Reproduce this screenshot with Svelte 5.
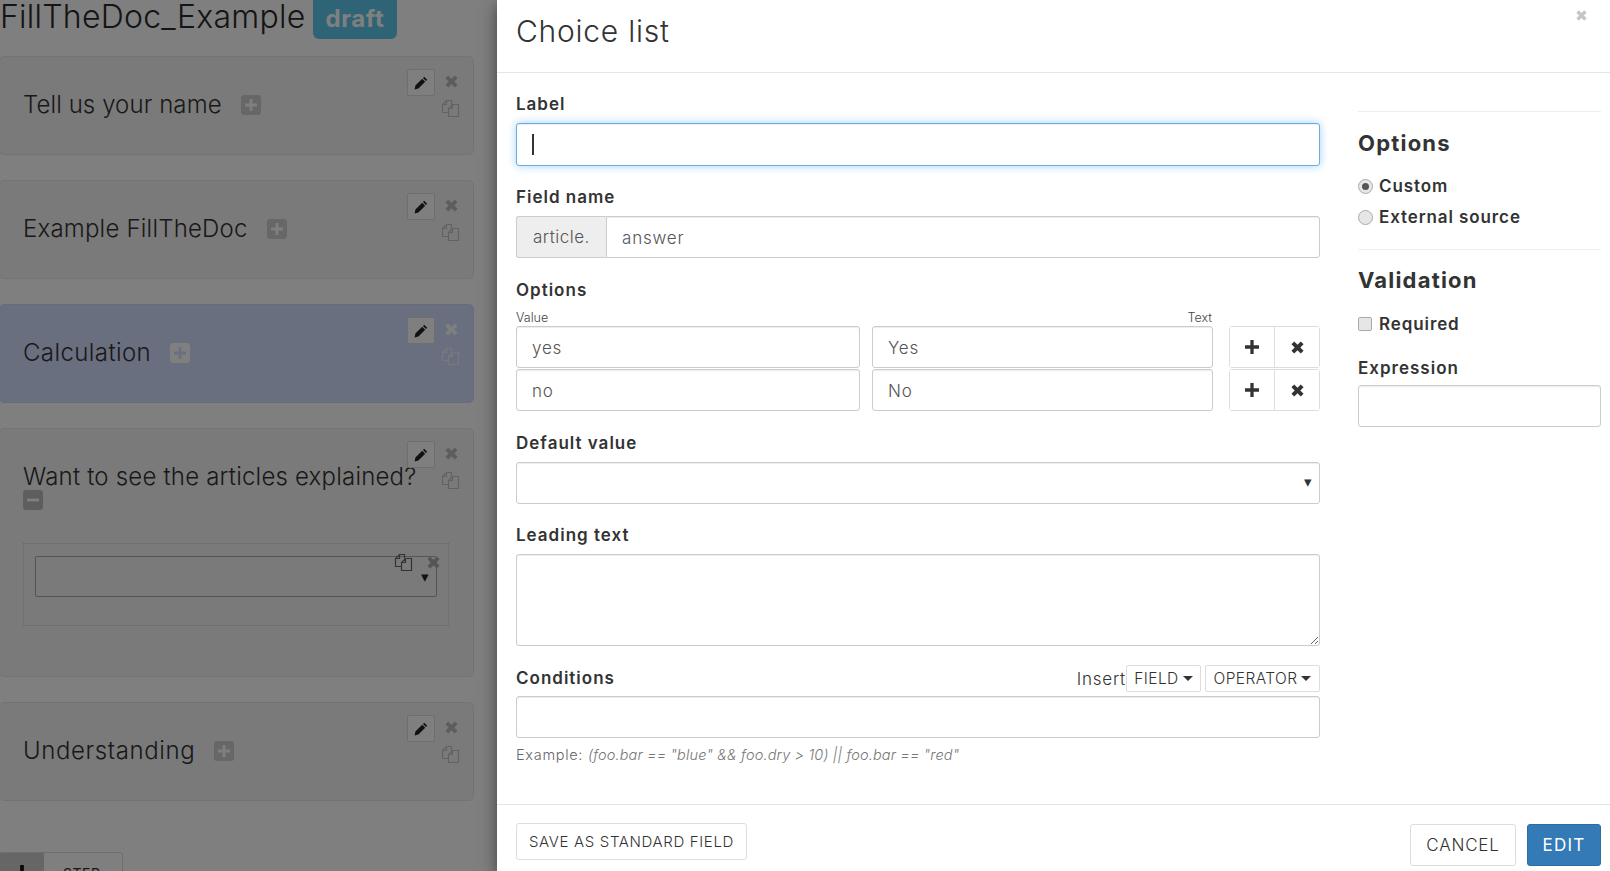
<script>
  const cards = [
    { title: 'Tell us your name', spacing: .08 },
    { title: 'Example FillTheDoc', spacing: .2 },
    { title: 'Calculation', spacing: .4, active: true },
    { title: 'Want to see the articles explained?', spacing: .2, open: true },
    { title: 'Understanding', spacing: .6 }
  ];
  const options = [
    { value: 'yes', text: 'Yes' },
    { value: 'no', text: 'No' }
  ];
</script>

{#snippet pencil()}
  <svg viewBox="0 0 14 14" width="14" height="14" aria-hidden="true"><path d="M10.2 0.8 13.2 3.8 12 5 9 2ZM8.2 2.8 11.2 5.8 4.4 12.6 0.6 13.4 1.4 9.6Z" fill="currentColor"/></svg>
{/snippet}
{#snippet copyIcon()}
  <svg viewBox="0 0 19 19" width="19" height="19" fill="none" stroke="currentColor" stroke-width="1.2" aria-hidden="true"><path d="M7 13.5H1.5V5.5L5.5 1.5H10.5V5.5M5.5 1.5V5.5H1.5"/><path d="M7.5 17.5V9.5L11.5 5.5H17.5V17.5ZM11.5 5.5V9.5H7.5"/></svg>
{/snippet}
{#snippet times(size)}
  <svg viewBox="0 0 12 12" width={size} height={size} aria-hidden="true"><path d="M3 0.4 6 3.4 9 0.4 11.6 3 8.6 6 11.6 9 9 11.6 6 8.6 3 11.6 0.4 9 3.4 6 0.4 3Z" fill="currentColor"/></svg>
{/snippet}
{#snippet plus(size)}
  <svg viewBox="0 0 12 12" width={size} height={size} aria-hidden="true"><path d="M4.6 0H7.4V4.6H12V7.4H7.4V12H4.6V7.4H0V4.6H4.6Z" fill="currentColor"/></svg>
{/snippet}

<div class="page">
  <div class="backdrop-pane">
    <div class="doc-head">
      <h1>FillTheDoc_Example</h1>
      <span class="badge">draft</span>
    </div>
    <div class="cards">
      {#each cards as card}
        <section class="card" class:active={card.active} class:open={card.open}>
          <div class="card-actions">
            <button class="pen">{@render pencil()}</button>
            <span class="card-x">{@render times(13)}</span>
            <span class="card-copy">{@render copyIcon()}</span>
          </div>
          <h2 style:letter-spacing="{card.spacing}px">{card.title}<span class="toggle" class:wrapped={card.open}>
            {#if card.open}<svg viewBox="0 0 12 12" width="12" height="12" aria-hidden="true"><rect y="4.6" width="12" height="2.8" fill="currentColor"/></svg>{:else}{@render plus(12)}{/if}
          </span></h2>
          {#if card.open}
            <div class="dotted">
              <div class="fake-select">
                <span class="fs-copy">{@render copyIcon()}</span>
                <span class="fs-x">{@render times(13)}</span>
                <span class="fs-arrow">▾</span>
              </div>
            </div>
          {/if}
        </section>
      {/each}
    </div>
    <div class="step-btn">
      <span class="step-plus">{@render plus(16)}</span>
      <span class="step-label">STEP</span>
    </div>
    <div class="overlay"></div>
  </div>

  <div class="modal">
    <header class="modal-head">
      <h3>Choice list</h3>
      <span class="close">{@render times(11)}</span>
    </header>

    <div class="modal-body">
      <form class="main">
        <label class="lab" for="f-label">Label</label>
        <div class="focus-wrap">
          <input id="f-label" class="ctl focus" value="" />
          <span class="caret"></span>
        </div>

        <label class="lab gap first-gap" for="f-name">Field name</label>
        <div class="group">
          <span class="addon">article.</span>
          <input id="f-name" class="ctl joined" value="answer" />
        </div>

        <div class="lab gap">Options</div>
        <div class="minis"><span>Value</span><span>Text</span></div>
        <div class="rows">
          {#each options as o}
            <div class="row">
              <input class="ctl" value={o.value} />
              <input class="ctl" value={o.text} />
              <div class="btns">
                <button type="button">{@render plus(14)}</button>
                <button type="button">{@render times(13)}</button>
              </div>
            </div>
          {/each}
        </div>

        <label class="lab gap" for="f-def">Default value</label>
        <div class="select"><span class="sel-arrow">▾</span></div>

        <label class="lab gap lead" for="f-lead">Leading text</label>
        <textarea id="f-lead" class="ctl area"></textarea>

        <div class="cond-head">
          <span class="lab">Conditions</span>
          <div class="insert">
            <span class="ins-word">Insert</span>
            <button type="button" class="drop">FIELD<i></i></button>
            <button type="button" class="drop op">OPERATOR<i></i></button>
          </div>
        </div>
        <input class="ctl" value="" />
        <p class="example">Example: <em>(foo.bar == "blue" &amp;&amp; foo.dry &gt; 10) || foo.bar == "red"</em></p>
      </form>

      <aside class="side">
        <hr />
        <h4>Options</h4>
        <div class="radio-line"><span class="radio on"></span>Custom</div>
        <div class="radio-line second"><span class="radio"></span>External source</div>
        <hr class="hr2" />
        <h4>Validation</h4>
        <div class="check-line"><span class="check"></span>Required</div>
        <div class="lab expr">Expression</div>
        <input class="ctl" value="" />
      </aside>
    </div>

    <footer class="modal-foot">
      <button class="btn save">SAVE AS STANDARD FIELD</button>
      <div class="foot-right">
        <button class="btn big">CANCEL</button>
        <button class="btn big primary">EDIT</button>
      </div>
    </footer>
  </div>
</div>

<style>
  :global(body) { margin: 0; }
  .page {
    width: 1610px; height: 871px; overflow: hidden;
    display: grid; grid-template-columns: 497px 1fr;
    font-family: Inter, "Liberation Sans", sans-serif; color: #333;
    background: #fff;
  }
  button { font-family: inherit; cursor: pointer; }

  /* left page */
  .backdrop-pane { position: relative; overflow: hidden; }
  .overlay { position: absolute; inset: 0; background: rgba(0,0,0,.5); }
  .doc-head { display: flex; gap: 7px; height: 39px; align-items: flex-start; }
  h1 { margin: 0; font-size: 32px; font-weight: 300; line-height: 33px; letter-spacing: .25px; white-space: nowrap; color: #2a2a2a; }
  .badge {
    background: #5fc8ec; color: #fff; font-weight: 700; font-size: 24px; line-height: 37px; height: 39px;
    padding: 0 13px; border-radius: 0 0 6px 6px; letter-spacing: .6px; width: 58px; text-align: center;
  }
  .cards { margin-top: 17px; display: flex; flex-direction: column; gap: 25px; width: 474px; }
  .card {
    position: relative; height: 99px; box-sizing: border-box;
    background: #f5f5f5; border: 1px solid #e6e6e6; border-radius: 5px;
    padding: 33px 50px 0 23px; margin-left: -1px;
  }
  .card.active { background: #d4deff; border-color: #cdd8f5; }
  .card.open { height: 249px; }
  h2 { margin: 0; font-size: 24px; line-height: 30px; font-weight: 300; color: #333; }
  .toggle {
    display: inline-flex; align-items: center; justify-content: center; vertical-align: 2px;
    width: 20px; height: 20px; border-radius: 3px; background: #cfcfcf; color: #fff; margin-left: 19px;
  }
  .active .toggle { background: #fff; color: #d4deff; }
  .toggle.wrapped { display: flex; margin: -2px 0 0; background: #bdbdbd; }
  .card-actions { position: absolute; inset: 0; pointer-events: none; }
  .pen {
    position: absolute; top: 12px; left: 407px; width: 28px; height: 27px; box-sizing: border-box;
    display: flex; align-items: center; justify-content: center; padding: 0;
    background: #fff; border: 1px solid #ddd; border-radius: 2px; color: #222;
  }
  .card-x { position: absolute; top: 18px; left: 445px; color: #bbb; display: flex; }
  .active .card-x { color: #fff; }
  .card-copy { position: absolute; top: 42px; left: 441px; color: #c4c4c4; display: flex; }
  .active .card-copy { color: #f0f0ff; }
  .dotted {
    position: relative; margin-top: 33px; width: 426px; height: 83px; box-sizing: border-box;
    border: 1px dotted #ccc; padding: 12px 11px 0;
  }
  .fake-select {
    position: relative; height: 41px; box-sizing: border-box; border: 1px solid #aaa; border-radius: 2px;
  }
  .fs-copy { position: absolute; top: -4px; left: 358px; color: #666; display: flex; }
  .fs-x { position: absolute; top: -1px; left: 391px; color: #aaa; display: flex; }
  .fs-arrow { position: absolute; top: 10px; left: 385px; font-size: 15px; line-height: 20px; color: #222; }
  .step-btn {
    margin-top: 51px; width: 124px; height: 40px; box-sizing: border-box; display: flex;
    border: 1px solid #ddd; border-radius: 3px; margin-left: -1px;
  }
  .step-plus { width: 44px; background: #ccc; display: flex; justify-content: center; padding-top: 12px; color: #111; }
  .step-label { padding: 12px 0 0 19px; font-size: 14px; letter-spacing: .5px; }

  /* modal */
  .modal {
    position: relative; z-index: 2; height: 871px; display: flex; flex-direction: column;
    background: #fff; box-shadow: 0 5px 15px rgba(0,0,0,.5); min-width: 0;
  }
  .modal-head { position: relative; height: 72px; border-bottom: 1px solid #e5e5e5; padding-left: 19px; display: flex; align-items: center; flex: none; }
  h3 { margin: -10px 0 0; font-size: 30px; font-weight: 300; letter-spacing: .75px; line-height: 34px; color: #333; }
  .close { position: absolute; top: 10px; right: 23px; color: #c6c6c6; display: flex; }
  .modal-body { flex: 1; display: flex; padding: 20px 9px 0 19px; gap: 38px; min-height: 0; }
  .main { width: 804px; flex: none; display: flex; flex-direction: column; }
  .side { width: 243px; flex: none; padding-top: 18px; }
  .lab { display: block; font-size: 17px; font-weight: 600; line-height: 23px; height: 20px; margin-bottom: 10px; letter-spacing: 1px; color: #333; }
  .lab.gap { margin-top: 21px; }
  .lab.first-gap { margin-top: 20px; }
  .lab.lead { margin-bottom: 9px; line-height: 21px; }
  .ctl {
    display: block; width: 100%; height: 42px; box-sizing: border-box; border: 1px solid #ccc; border-radius: 3px;
    padding: 1px 15px 0; font: 300 17px Inter, "Liberation Sans", sans-serif; letter-spacing: .8px; color: #555; background: #fff; outline: none;
    box-shadow: inset 0 1px 1px rgba(0,0,0,.075);
  }
  .focus { height: 43px; border-color: #66afe9; box-shadow: inset 0 1px 1px rgba(0,0,0,.075), 0 0 8px rgba(102,175,233,.6); }
  .focus-wrap { position: relative; }
  .caret { position: absolute; left: 16px; top: 11px; width: 2px; height: 21px; background: #333; }
  .group { display: flex; }
  .addon {
    flex: none; width: 90px; height: 42px; box-sizing: border-box; background: #eee; border: 1px solid #ccc; border-right: 0;
    border-radius: 3px 0 0 3px; line-height: 40px; padding-left: 16px; font-size: 17px; font-weight: 300; letter-spacing: .5px; color: #555;
  }
  .joined { border-radius: 0 3px 3px 0; }
  .minis { display: flex; justify-content: space-between; width: 696px; height: 14px; font-size: 12.5px; font-weight: 300; line-height: 17px; margin-bottom: 3px; color: #444; }
  .rows { display: flex; flex-direction: column; gap: 1px; }
  .row { display: grid; grid-template-columns: 344px 341px 91px; column-gap: 12px; }
  .btns { display: flex; height: 42px; box-sizing: border-box; border: 1px solid #ddd; border-radius: 3px; width: 91px; margin-left: 4px; }
  .btns button { flex: 1; border: 0; background: #fff; padding: 0; color: #333; display: flex; align-items: center; justify-content: center; }
  .btns button + button { border-left: 1px solid #ddd; }
  .select { position: relative; height: 42px; box-sizing: border-box; border: 1px solid #ccc; border-radius: 3px; box-shadow: inset 0 1px 1px rgba(0,0,0,.075); }
  .sel-arrow { position: absolute; right: 7px; top: 9px; font-size: 15px; line-height: 20px; color: #333; }
  .area { height: 92px; padding: 6px 15px; resize: vertical; }
  .cond-head { display: flex; justify-content: space-between; margin-top: 19px; height: 27px; margin-bottom: 4px; }
  .cond-head .lab { margin: 2px 0 0; }
  .insert { display: flex; align-items: center; gap: 4px; }
  .ins-word { font-size: 17px; font-weight: 300; letter-spacing: .8px; color: #333; margin-right: -4px; }
  .drop {
    height: 27px; box-sizing: border-box; border: 1px solid #ddd; border-radius: 2px; background: #fff; padding: 0; width: 75px;
    font-size: 15.5px; font-weight: 300; letter-spacing: .4px; color: #333; display: flex; align-items: center; justify-content: center;
  }
  .drop.op { width: 115px; }
  .drop i { margin-left: 4px; width: 0; height: 0; border: 5px solid transparent; border-top-color: #333; border-bottom: 0; }
  .example { margin: 8px 0 0; font-size: 14.5px; line-height: 18px; font-weight: 300; color: #666; letter-spacing: .7px; }
  .example em { color: #777; letter-spacing: .15px; }
  hr { border: 0; border-top: 1px solid #eee; margin: 0; }
  h4 { margin: 19px 0 0; font-size: 22px; line-height: 24px; font-weight: 700; letter-spacing: 1.2px; color: #333; }
  .radio-line, .check-line { display: flex; align-items: center; font-size: 17px; font-weight: 600; line-height: 20px; color: #333; letter-spacing: .9px; }
  .radio-line { margin-top: 21px; }
  .radio-line.second { margin-top: 11px; }
  .radio { width: 15px; height: 15px; box-sizing: border-box; border-radius: 50%; border: 1px solid #aaa; background: #e6e6e6; margin-right: 6px; position: relative; }
  .radio.on::after { content: ""; position: absolute; inset: 3px; border-radius: 50%; background: #555; }
  .hr2 { margin-top: 22px; }
  .hr2 + h4 { margin-top: 18px; }
  .check-line { margin-top: 22px; }
  .check { width: 14px; height: 14px; box-sizing: border-box; border-radius: 2px; border: 1px solid #aaa; background: #e6e6e6; margin-right: 7px; }
  .lab.expr { margin: 23px 0 8px; }
  .modal-foot { flex: none; height: 67px; box-sizing: border-box; border-top: 1px solid #e5e5e5; display: flex; justify-content: space-between; align-items: flex-start; padding: 19px 9px 0 19px; }
  .foot-right { display: flex; gap: 11px; }
  .btn { box-sizing: border-box; background: #fff; border: 1px solid #ddd; border-radius: 3px; color: #333; font-weight: 300; padding: 0; }
  .save { width: 231px; height: 37px; font-size: 15px; letter-spacing: .65px; margin-top: -1px; }
  .big { width: 106px; height: 42px; font-size: 17px; letter-spacing: .8px; }
  .primary { width: 74px; background: #337ab7; border-color: #2e6da4; color: #fff; font-weight: 400; letter-spacing: 1.2px; }
</style>
